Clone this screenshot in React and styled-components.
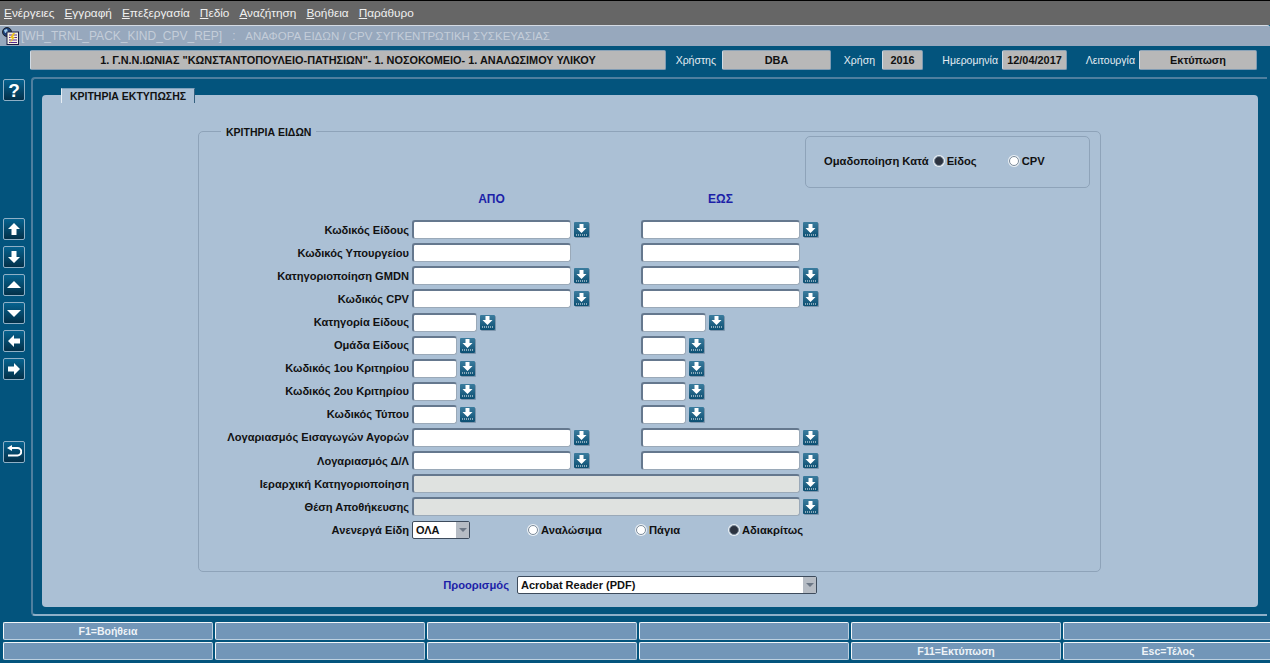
import React from 'react';
import styled, { createGlobalStyle } from 'styled-components';

const GlobalStyle = createGlobalStyle`
  html, body {
    margin: 0;
    padding: 0;
    background: #03547d;
    overflow: hidden;
  }
  body {
    font-family: "Liberation Sans", Arial, sans-serif;
    font-size: 11px;
  }
`;

const menuItems = [
  ['Ε', 'νέργειες'],
  ['Ε', 'γγραφή'],
  ['Ε', 'πεξεργασία'],
  ['Π', 'εδίο'],
  ['Α', 'ναζήτηση'],
  ['Β', 'οήθεια'],
  ['Π', 'αράθυρο'],
];

const rows = [
  { label: 'Κωδικός Είδους', size: 'long', lov: true },
  { label: 'Κωδικός Υπουργείου', size: 'long' },
  { label: 'Κατηγοριοποίηση GMDN', size: 'long', lov: true },
  { label: 'Κωδικός CPV', size: 'long', lov: true },
  { label: 'Κατηγορία Είδους', size: 'mid', lov: true },
  { label: 'Ομάδα Είδους', size: 'short', lov: true },
  { label: 'Κωδικός 1ου Κριτηρίου', size: 'short', lov: true },
  { label: 'Κωδικός 2ου Κριτηρίου', size: 'short', lov: true },
  { label: 'Κωδικός Τύπου', size: 'short', lov: true },
  { label: 'Λογαριασμός Εισαγωγών Αγορών', size: 'long', lov: true },
  { label: 'Λογαριασμός Δ/Λ', size: 'long', lov: true },
];

const widths = { long: 159, mid: 65, short: 45, full: 388 };

const Page = styled.div`
  width: 1270px;
  height: 663px;
  display: flex;
  flex-direction: column;
  overflow: hidden;
`;

const MenuBar = styled.nav`
  height: 24px;
  background: #666666;
  border-top: 1px solid #000;
  display: flex;
  align-items: center;
  gap: 10px;
  padding-left: 4px;
  color: #f0f0f0;
  font-size: 11.8px;
`;

const MenuItem = styled.span`
  u { text-decoration: underline; }
`;

const TitleBar = styled.div`
  height: 21px;
  background: #97a8bd;
  border-top: 1px solid #d5dbe3;
  border-radius: 0 3px 0 0;
  box-sizing: border-box;
  display: flex;
  align-items: center;
  gap: 2px;
  padding-left: 2px;
  color: #c4cdd9;
  font-size: 12px;
  white-space: pre;
`;

const TitleText = styled.span`
  font-size: 11.5px;
  margin-left: 2px;
`;

const StatusBar = styled.div`
  display: flex;
  align-items: center;
  height: 20px;
  margin-top: 4px;
  padding-left: 30px;
`;

const StatusField = styled.div`
  width: ${(p) => p.$w}px;
  height: 20px;
  box-sizing: border-box;
  background: #b8b8b8;
  border: 1px solid #7f9bb3;
  border-left-color: #d0dbe5;
  border-top-color: #8aa3b8;
  border-radius: 2px;
  display: flex;
  align-items: center;
  justify-content: center;
  color: #111;
  font-weight: bold;
  font-size: 10.9px;
  white-space: nowrap;
`;

const StatusLabel = styled.span`
  width: ${(p) => p.$w}px;
  text-align: right;
  padding-right: ${(p) => p.$pr}px;
  box-sizing: border-box;
  color: #e4ecf2;
  font-size: 10.5px;
  white-space: nowrap;
`;

const Body = styled.div`
  flex: 1;
  display: flex;
  margin-top: 7px;
  min-height: 0;
`;

const SideBar = styled.aside`
  width: 31px;
  flex: none;
  display: flex;
  flex-direction: column;
  align-items: flex-start;
  padding: 2px 0 0 3px;
  box-sizing: border-box;
`;

const SideButton = styled.button`
  width: 22px;
  height: 22px;
  flex: none;
  padding: 0;
  margin-bottom: ${(p) => p.$mb ?? 6}px;
  display: flex;
  align-items: center;
  justify-content: center;
  border: 1px solid #8fb0c6;
  border-radius: 2px;
  background: linear-gradient(#06628f, #033049);
`;

const Content = styled.div`
  flex: 1;
  display: flex;
  flex-direction: column;
  min-width: 0;
`;

const Frame = styled.main`
  height: 539px;
  box-sizing: border-box;
  border-top: 2px solid #4f7f9f;
  border-left: 2px solid #4f7f9f;
  border-bottom: 2px solid #8fb0c8;
  border-radius: 4px 0 0 4px;
  margin-right: 3px;
  padding: 16px 9px 0 9px;
`;

const TabPanel = styled.section`
  position: relative;
  height: 512px;
  background: #abc0d5;
  border-radius: 4px;
  box-sizing: border-box;
  padding: 36px 157px 0 156px;
`;

const Tab = styled.div`
  position: absolute;
  top: -7px;
  left: 19px;
  width: 134px;
  height: 15px;
  box-sizing: border-box;
  background: #abc0d5;
  border-left: 1px solid #e6edf3;
  border-right: 1px solid #35607f;
  border-top: 1px solid #7ea0ba;
  display: flex;
  align-items: center;
  justify-content: center;
  color: #111;
  font-size: 10.5px;
  font-weight: bold;
`;

const FieldSet = styled.div`
  position: relative;
  height: 441px;
  box-sizing: border-box;
  border: 1px solid #8ea3b9;
  border-radius: 5px;
  padding: 63px 0 0 0;
`;

const Legend = styled.span`
  position: absolute;
  top: -6px;
  left: 22px;
  padding: 0 5px;
  background: #abc0d5;
  color: #111;
  font-size: 10.5px;
  font-weight: bold;
`;

const GroupBox = styled.div`
  position: absolute;
  top: 4px;
  right: 10px;
  width: 285px;
  height: 52px;
  box-sizing: border-box;
  border: 1px solid #8ea3b9;
  border-radius: 5px;
  display: flex;
  align-items: center;
  padding: 0 0 2px 18px;
  color: #111;
  font-size: 11.2px;
  font-weight: bold;
`;

const GroupTitle = styled.span`
  margin-right: 5px;
  white-space: nowrap;
`;

const RadioLabel = styled.span`
  display: inline-flex;
  align-items: center;
  gap: 3px;
  width: ${(p) => p.$w}px;
  color: #111;
  font-weight: bold;
  font-size: 11.2px;
`;

const RadioDot = styled.span`
  width: 10px;
  height: 10px;
  flex: none;
  box-sizing: border-box;
  border-radius: 50%;
  background: ${(p) => (p.$on ? '#2c3340' : '#fff')};
  border: 1px solid #7b8b9b;
  box-shadow: 0 0 0 1px #e9eff4;
`;

const FormGrid = styled.div`
  display: grid;
  grid-template-columns: 213px 229px 1fr;
  grid-auto-rows: 23.1px;
  align-items: center;
`;

const ColumnHead = styled.div`
  color: #1c1fa8;
  font-weight: bold;
  font-size: 12px;
  text-align: center;
  width: 159px;
  height: 30px;
`;

const Label = styled.div`
  text-align: right;
  padding-right: 3px;
  color: #111;
  font-weight: bold;
  font-size: 11.1px;
  white-space: nowrap;
`;

const Cell = styled.div`
  display: flex;
  align-items: center;
  gap: 3px;
  grid-column: ${(p) => p.$span || 'auto'};
`;

const Input = styled.div`
  width: ${(p) => widths[p.$size]}px;
  height: 19px;
  box-sizing: border-box;
  background: ${(p) => (p.$off ? '#dfe2e0' : '#fff')};
  border: 2px solid #65788e;
  border-right: 1px solid #9aa9b8;
  border-bottom: 1px solid #9aa9b8;
  border-radius: 3px;
`;

const LovButton = styled.button`
  width: 15px;
  height: 15px;
  padding: 0;
  flex: none;
  border: 0;
  border-radius: 1px;
  background: linear-gradient(#3b7c9e, #0c4f72);
  box-shadow: 1px 1px 0 #7d95ac;
  display: flex;
  align-items: center;
  justify-content: center;
`;

const Dropdown = styled.div`
  width: ${(p) => p.$w}px;
  height: ${(p) => p.$h}px;
  box-sizing: border-box;
  background: #fff;
  border: 1px solid #3d4b5c;
  border-radius: 2px;
  display: flex;
  align-items: center;
  justify-content: space-between;
  padding-left: 3px;
  color: #111;
  font-weight: bold;
  font-size: 11px;
`;

const DropArrow = styled.span`
  width: 13px;
  height: 100%;
  background: #b6bcc4;
  display: flex;
  align-items: center;
  justify-content: center;
  &::after {
    content: '';
    border-left: 4px solid transparent;
    border-right: 4px solid transparent;
    border-top: 4px solid #6c7785;
  }
`;

const RadioRow = styled.div`
  display: flex;
  align-items: center;
  padding-left: 55px;
`;

const DestRow = styled.div`
  display: flex;
  align-items: center;
  justify-content: flex-end;
  gap: 8px;
  margin: 4px 284px 0 0;
  color: #1c1fa8;
  font-weight: bold;
  font-size: 11.2px;
`;

const KeyGrid = styled.div`
  display: grid;
  grid-template-columns: repeat(6, 210px);
  grid-auto-rows: 18px;
  gap: 2px;
  margin: 6px 0 0 -28px;
`;

const KeyButton = styled.div`
  box-sizing: border-box;
  background: #7296b8;
  border: 1px solid #bcd0e0;
  border-top-color: #f2f6f9;
  border-left-color: #f2f6f9;
  border-radius: 2px;
  display: flex;
  align-items: center;
  justify-content: center;
  color: #eef3f7;
  font-weight: bold;
  font-size: 10.5px;
`;

const QuestionMark = styled.span`
  color: #fff;
  font-size: 19px;
  font-weight: bold;
  line-height: 1;
`;

const LogoIcon = () => (
  <svg width="17" height="18" viewBox="0 0 17 18">
    <circle cx="5" cy="5" r="4.5" fill="#1d3f78" stroke="#111" strokeWidth="0.8" />
    <path d="M2 3l3-1 1 3-3 1z" fill="#9fd0ee" />
    <rect x="5" y="5" width="11.5" height="12.5" fill="#f6f2e2" stroke="#1c1c44" />
    <path d="M7 8h8M7 10.5h8M7 13h8M7 15.5h8" stroke="#5b2a90" strokeWidth="1" />
    <path d="M11 6l-3 5h2l-2 5 5-6h-2l2-4z" fill="#eec21f" />
  </svg>
);

const icons = {
  up: 'M7 1L13 7H9.5V13H4.5V7H1Z',
  down: 'M4.5 1H9.5V7H13L7 13L1 7H4.5Z',
  triUp: 'M7 3L14 10H0Z',
  triDown: 'M0 4H14L7 11Z',
  left: 'M1 7L7 1V4.5H13V9.5H7V13Z',
  right: 'M1 4.5H7V1L13 7L7 13V9.5H1Z',
};

const SideIcon = ({ name }) => (
  <svg width="14" height="14" viewBox="0 0 14 14">
    <path d={icons[name]} fill="#fff" />
  </svg>
);

const ReturnIcon = () => (
  <svg width="16" height="14" viewBox="0 0 16 14">
    <path d="M5 3H11.5A3.5 3.5 0 0 1 11.5 10.5H2" fill="none" stroke="#fff" strokeWidth="2" />
    <path d="M1 3L6 0V6Z" fill="#fff" />
  </svg>
);

const LovIcon = () => (
  <svg width="11" height="12" viewBox="0 0 11 12">
    <path d="M3.5 0H7.5V4H10.5L5.5 9L.5 4H3.5Z" fill="#fff" />
    <path d="M0 11H11" stroke="#fff" strokeWidth="1" strokeDasharray="1 1" />
  </svg>
);

const FieldCell = ({ size, lov, off, span }) => (
  <Cell $span={span}>
    <Input $size={size} $off={off} />
    {lov && <LovButton><LovIcon /></LovButton>}
  </Cell>
);

const Radio = ({ on, w, children }) => (
  <RadioLabel $w={w}>
    <RadioDot $on={on} />
    {children}
  </RadioLabel>
);

export default function App() {
  return (
    <Page>
      <GlobalStyle />
      <MenuBar>
        {menuItems.map(([first, rest], i) => (
          <MenuItem key={i}>
            <u>{first}</u>
            {rest}
          </MenuItem>
        ))}
      </MenuBar>
      <TitleBar>
        <LogoIcon />
        [WH_TRNL_PACK_KIND_CPV_REP]   :
        <TitleText>  ΑΝΑΦΟΡΑ ΕΙΔΩΝ / CPV ΣΥΓΚΕΝΤΡΩΤΙΚΗ ΣΥΣΚΕΥΑΣΙΑΣ</TitleText>
      </TitleBar>
      <StatusBar>
        <StatusField $w={636}>1. Γ.Ν.Ν.ΙΩΝΙΑΣ "ΚΩΝΣΤΑΝΤΟΠΟΥΛΕΙΟ-ΠΑΤΗΣΙΩΝ"- 1. ΝΟΣΟΚΟΜΕΙΟ- 1. ΑΝΑΛΩΣΙΜΟΥ ΥΛΙΚΟΥ</StatusField>
        <StatusLabel $w={56} $pr={6}>Χρήστης</StatusLabel>
        <StatusField $w={109}>DBA</StatusField>
        <StatusLabel $w={51} $pr={7}>Χρήση</StatusLabel>
        <StatusField $w={41}>2016</StatusField>
        <StatusLabel $w={79} $pr={4}>Ημερομηνία</StatusLabel>
        <StatusField $w={65}>12/04/2017</StatusField>
        <StatusLabel $w={72} $pr={4}>Λειτουργία</StatusLabel>
        <StatusField $w={118}>Εκτύπωση</StatusField>
      </StatusBar>
      <Body>
        <SideBar>
          <SideButton $mb={117}><QuestionMark>?</QuestionMark></SideButton>
          <SideButton><SideIcon name="up" /></SideButton>
          <SideButton><SideIcon name="down" /></SideButton>
          <SideButton><SideIcon name="triUp" /></SideButton>
          <SideButton><SideIcon name="triDown" /></SideButton>
          <SideButton><SideIcon name="left" /></SideButton>
          <SideButton $mb={61}><SideIcon name="right" /></SideButton>
          <SideButton><ReturnIcon /></SideButton>
        </SideBar>
        <Content>
          <Frame>
            <TabPanel>
              <Tab>ΚΡΙΤΗΡΙΑ ΕΚΤΥΠΩΣΗΣ</Tab>
              <FieldSet>
                <Legend>ΚΡΙΤΗΡΙΑ ΕΙΔΩΝ</Legend>
                <GroupBox>
                  <GroupTitle>Ομαδοποίηση Κατά</GroupTitle>
                  <Radio on w={75}>Είδος</Radio>
                  <Radio w={50}>CPV</Radio>
                </GroupBox>
                <FormGrid>
                  <span />
                  <ColumnHead>ΑΠΟ</ColumnHead>
                  <ColumnHead>ΕΩΣ</ColumnHead>
                  {rows.map((row) => (
                    <React.Fragment key={row.label}>
                      <Label>{row.label}</Label>
                      <FieldCell size={row.size} lov={row.lov} />
                      <FieldCell size={row.size} lov={row.lov} />
                    </React.Fragment>
                  ))}
                  <Label>Ιεραρχική Κατηγοριοποίηση</Label>
                  <FieldCell size="full" lov off span="span 2" />
                  <Label>Θέση Αποθήκευσης</Label>
                  <FieldCell size="full" lov off span="span 2" />
                  <Label>Ανενεργά Είδη</Label>
                  <Cell $span="span 2">
                    <Dropdown $w={58} $h={18}>ΟΛΑ<DropArrow /></Dropdown>
                    <RadioRow>
                      <Radio w={108}>Αναλώσιμα</Radio>
                      <Radio w={93}>Πάγια</Radio>
                      <Radio w={90} on>Αδιακρίτως</Radio>
                    </RadioRow>
                  </Cell>
                </FormGrid>
              </FieldSet>
              <DestRow>
                Προορισμός
                <Dropdown $w={300} $h={18}>Acrobat Reader (PDF)<DropArrow /></Dropdown>
              </DestRow>
            </TabPanel>
          </Frame>
          <KeyGrid>
            <KeyButton>F1=Βοήθεια</KeyButton>
            <KeyButton />
            <KeyButton />
            <KeyButton />
            <KeyButton />
            <KeyButton />
            <KeyButton />
            <KeyButton />
            <KeyButton />
            <KeyButton />
            <KeyButton>F11=Εκτύπωση</KeyButton>
            <KeyButton>Esc=Τέλος</KeyButton>
          </KeyGrid>
        </Content>
      </Body>
    </Page>
  );
}
